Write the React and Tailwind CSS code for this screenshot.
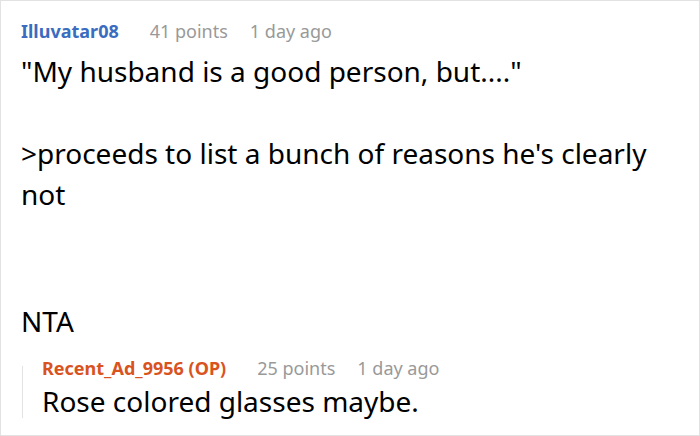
import React from 'react';

const font = { fontFamily: '"Noto Sans", "Open Sans", sans-serif' };

function Meta({ name, nameClass, points }) {
  return (
    <div className="flex items-baseline text-[18px] leading-[24px]">
      <span className={`font-bold ${nameClass}`}>{name}</span>
      <span className="ml-[31px] text-[#999999]">{points} points</span>
      <span className="ml-[22px] text-[#999999]">1 day ago</span>
    </div>
  );
}

export default function App() {
  return (
    <div style={font} className="w-[700px] h-[436px] bg-white border border-[#e2e2e2] overflow-hidden">
      <div className="pl-[20px] pr-[20px] pt-[18px]">
        <Meta name="Illuvatar08" nameClass="text-[#3a6cbf]" points="41" />
        <div className="mt-[8px] text-[28px] leading-[41px] text-black">
          <p>"My husband is a good person, but...."</p>
          <p className="mt-[41px]">&gt;proceeds to list a bunch of reasons he's clearly not</p>
          <p className="mt-[86px]">NTA</p>
        </div>
        <div className="mt-[14px] flex">
          <div className="w-px bg-[#e2e2e2] mt-[10px] mb-[2px] ml-[1px]" />
          <div className="pl-[19px]">
            <Meta name="Recent_Ad_9956 (OP)" nameClass="text-[#d9531e]" points="25" />
            <div className="mt-[2px] text-[28px] leading-[38px] text-black">Rose colored glasses maybe.</div>
          </div>
        </div>
      </div>
    </div>
  );
}
